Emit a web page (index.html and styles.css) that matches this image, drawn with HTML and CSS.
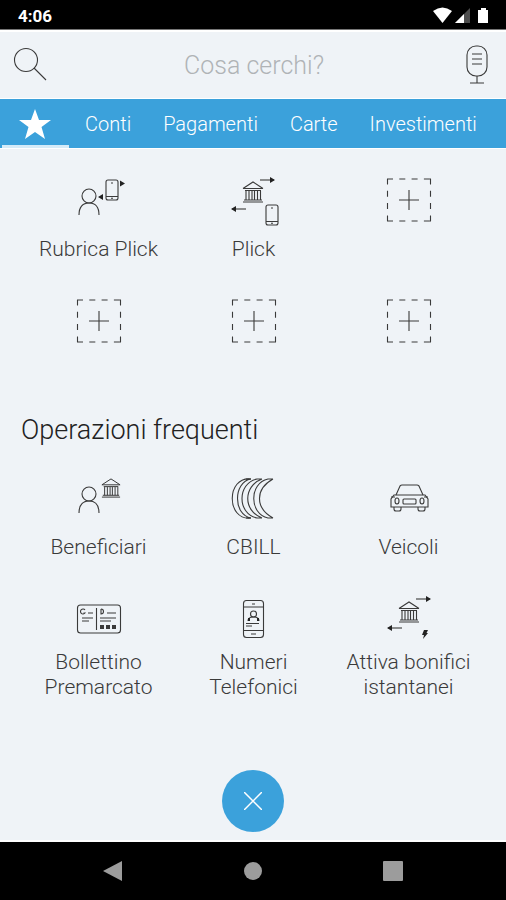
FILE: index.html
```html
<!DOCTYPE html>
<html lang="it">

<head>
    <meta charset="UTF-8">
    <meta name="viewport" content="width=device-width, initial-scale=1.0">
    <title>Operazioni</title>
    <link rel="stylesheet" href="styles.css">
</head>

<body>
    <!-- shapes shared by several icons -->
    <svg class="sprite" aria-hidden="true">
        <symbol id="empty" viewBox="0 0 56 50">
            <path d="M6 4H50M6 46H50M6.500 3.500V46.500M49.500 3.500V46.500" stroke-dasharray="6 6.300" />
            <path d="M28 15V35M18 25H38" />
        </symbol>
        <symbol id="person" viewBox="0 0 22 28">
            <circle cx="11" cy="8" r="7" />
            <path d="M1 27C1 19 5 15 11 15S21 19 21 27" />
        </symbol>
        <symbol id="bank" viewBox="0 0 22 22">
            <path d="M1 7.500L11 1L21 7.500M1 7.500H21M3 9.500H19M1 21H21M2 19H20" />
            <path d="M4 10V19M7 10V19M10 10V19M12.500 10V19M15.500 10V19M18.500 10V19" />
        </symbol>
        <symbol id="phone" viewBox="0 0 14 22">
            <rect x="1" y="1" width="12" height="20" rx="2" />
            <path d="M1 17.500H13M6 4H8M6 19.200H8" />
        </symbol>
        <symbol id="arrow" viewBox="0 0 16 6">
            <path d="M0 3H14" />
            <path class="solid" d="M10 0L15 3L10 6Z" />
        </symbol>
    </svg>

    <div class="status">
        <span>4:06</span>
        <svg width="58" height="18" viewBox="0 0 58 18">
            <path d="M1 4Q10.500 -3 20 4L10.500 16Z" />
            <path d="M23 16L38 1V16Z" opacity="0.300" />
            <path d="M23 16L32 7V16Z" />
            <path d="M46 3H49V1H54V3H56V16H46Z" />
        </svg>
    </div>

    <header>
        <label for="search" aria-label="Cerca">
            <svg class="icon" width="34" height="34" viewBox="0 0 34 34">
                <circle cx="12" cy="12" r="11.500" />
                <path d="M20 20L32 32" />
            </svg>
        </label>
        <input type="text" id="search" placeholder="Cosa cerchi?">
        <button type="button" aria-label="Ricerca vocale">
            <svg class="icon" width="22" height="40" viewBox="0 0 22 40">
                <rect x="1" y="1" width="20" height="30" rx="9" />
                <path d="M6 9H16M6 14H16M6 19H16M11 31V38M4 38H18" />
            </svg>
        </button>
    </header>

    <nav class="tabs">
        <a href="#preferiti" class="active" aria-label="Preferiti">
            <svg width="32" height="30" viewBox="0 0 32 30">
                <path d="M16 0L20 11H32L22.500 18L26 30L16 23L6 30L9.500 18L0 11H12Z" />
            </svg>
        </a>
        <a href="#conti">Conti</a>
        <a href="#pagamenti">Pagamenti</a>
        <a href="#carte">Carte</a>
        <a href="#investimenti">Investimenti</a>
    </nav>

    <main>
        <section class="grid" id="preferiti">
            <button type="button">
                <svg class="icon" width="56" height="50" viewBox="0 0 56 50">
                    <use href="#person" x="7" y="13" width="22" height="28" />
                    <use href="#phone" x="34" y="4" width="14" height="22" />
                    <path class="solid" d="M49 5.500L54 8.500L49 11.500ZM32 19L27 22L32 25Z" />
                </svg>
                <span>Rubrica Plick</span>
            </button>
            <button type="button">
                <svg class="icon" width="56" height="50" viewBox="0 0 56 50">
                    <use href="#bank" x="16" y="6" width="22" height="22" />
                    <use href="#arrow" x="34" y="2" width="16" height="6" />
                    <use href="#arrow" x="-20" y="-37" width="16" height="6" transform="rotate(180)" />
                    <use href="#phone" x="39" y="29" width="14" height="22" />
                </svg>
                <span>Plick</span>
            </button>
            <button type="button" aria-label="Aggiungi">
                <svg class="icon" width="56" height="50"><use href="#empty" /></svg>
            </button>
            <button type="button" aria-label="Aggiungi">
                <svg class="icon" width="56" height="50"><use href="#empty" /></svg>
            </button>
            <button type="button" aria-label="Aggiungi">
                <svg class="icon" width="56" height="50"><use href="#empty" /></svg>
            </button>
            <button type="button" aria-label="Aggiungi">
                <svg class="icon" width="56" height="50"><use href="#empty" /></svg>
            </button>
        </section>

        <h2>Operazioni frequenti</h2>

        <section class="grid">
            <button type="button">
                <svg class="icon" width="56" height="50" viewBox="0 0 56 50">
                    <use href="#person" x="7" y="13" width="22" height="28" />
                    <use href="#bank" x="30" y="5" width="20" height="20" />
                </svg>
                <span>Beneficiari</span>
            </button>
            <button type="button">
                <svg class="icon" width="56" height="50" viewBox="0 0 56 50">
                    <path d="M25 6C0 3 0 48 25 45M25 6C7 9 7 42 25 45" />
                    <path d="M36 6H31C11 10 11 41 31 45H36M36 6C17 13 17 38 36 45" />
                    <path d="M47 6H42C23 10 23 41 42 45H47M47 6C29 16 29 35 47 45" />
                    <path d="M20 6H25M20 45H25" />
                </svg>
                <span>CBILL</span>
            </button>
            <button type="button">
                <svg class="icon" width="56" height="50" viewBox="0 0 56 50">
                    <path d="M15 22L19 13Q20 12 21 12H36Q37 12 38 13L42 22" />
                    <path d="M13 22H44L47 26V34H10V26Z" />
                    <path d="M13 34V36Q13 38 15 38H18Q20 38 20 36V34M37 34V36Q37 38 39 38H42Q44 38 44 36V34M10 24H14M43 24H47" />
                    <ellipse cx="16" cy="28" rx="2" ry="3" />
                    <ellipse cx="41" cy="28" rx="2" ry="3" />
                    <rect x="22" y="26" width="13" height="5" rx="1" />
                </svg>
                <span>Veicoli</span>
            </button>
            <button type="button" class="tall">
                <svg class="icon" width="56" height="50" viewBox="0 0 56 50">
                    <rect x="6.500" y="11" width="43" height="28" rx="3" />
                    <path d="M25.500 14V36M11 24H22M11 27H18M17 19H22M29 24H45M29 27H40M36 19H45" />
                    <path d="M14 16A2.500 2.500 0 1 0 14 19H12.500M30 15V20A2.500 2.500 0 1 0 30 15" />
                    <path d="M29 33H45" stroke-width="4" stroke-dasharray="4 2" />
                </svg>
                <span>Bollettino Premarcato</span>
            </button>
            <button type="button" class="tall">
                <svg class="icon" width="56" height="50" viewBox="0 0 56 50">
                    <rect x="17.500" y="6.500" width="20" height="37" rx="3" />
                    <path d="M17.500 13H37.500M17.500 36.500H37.500M26 10H29M25 40H30" />
                    <circle cx="27.500" cy="20" r="3" />
                    <path d="M22 27Q22 23 27.500 23T33 27" />
                    <path d="M20 29.500H33M20 32H26" />
                    <path class="solid" d="M22 24H24V27H22ZM31 24H33V27H31Z" />
                </svg>
                <span>Numeri Telefonici</span>
            </button>
            <button type="button" class="tall">
                <svg class="icon" width="56" height="50" viewBox="0 0 56 50">
                    <use href="#bank" x="17" y="7" width="22" height="22" />
                    <use href="#arrow" x="35" y="2" width="16" height="6" />
                    <use href="#arrow" x="-21" y="-37" width="16" height="6" transform="rotate(180)" />
                    <path class="solid" d="M43 36H47L45.500 39H47L42 45L43 41H41Z" />
                </svg>
                <span>Attiva bonifici istantanei</span>
            </button>
        </section>
    </main>

    <button type="button" class="close" aria-label="Chiudi">
        <svg width="18" height="18" viewBox="0 0 18 18">
            <path d="M0 0L18 18M18 0L0 18" />
        </svg>
    </button>

    <footer>
        <button type="button" aria-label="Indietro">
            <svg width="20" height="22" viewBox="0 0 20 22"><path d="M0 11L19 1V21Z" /></svg>
        </button>
        <button type="button" aria-label="Home">
            <svg width="20" height="22" viewBox="0 0 20 22"><circle cx="10" cy="11" r="9" /></svg>
        </button>
        <button type="button" aria-label="Recenti">
            <svg width="20" height="22" viewBox="0 0 20 22"><rect y="1" width="20" height="20" rx="1" /></svg>
        </button>
    </footer>
</body>

</html>
```
FILE: styles.css
```css
* {
    box-sizing: border-box;
    margin: 0;
    padding: 0;
}

body {
    display: flex;
    flex-direction: column;
    min-height: 100vh;
    background-color: #eff3f7;
    color: #3a3a3a;
    font-family: Roboto, sans-serif;
    font-weight: 300;
}

button {
    border: none;
    background: none;
    color: inherit;
    font: inherit;
    cursor: pointer;
}

svg {
    display: block;
}

.sprite {
    display: none;
}

.icon {
    fill: none;
    stroke: #3a3a3a;
    stroke-width: 1.1;
    overflow: visible;
}

.solid {
    fill: #222;
    stroke: none;
}

.status {
    display: flex;
    align-items: center;
    justify-content: space-between;
    height: 30px;
    padding: 2px 16px 0 18px;
    background-color: #000;
    border-bottom: 1px solid #777;
    color: #fff;
    font-size: 17px;
    font-weight: 700;
}

.status svg {
    fill: #fff;
}

header {
    display: flex;
    align-items: center;
    justify-content: space-between;
    height: 69px;
    padding: 0 18px 0 14px;
    border-top: 2px solid #fff;
    border-bottom: 1px solid #fff;
}

header input {
    flex: 1;
    min-width: 0;
    padding-right: 6px;
    border: none;
    outline: none;
    background: none;
    color: #333;
    font: inherit;
    font-size: 25px;
    text-align: center;
}

header input::placeholder {
    color: #b0b3b6;
    opacity: 1;
}

.tabs {
    display: flex;
    height: 50px;
    padding-left: 2px;
    background-color: #3ba1db;
    border-bottom: 1px solid #fff;
    overflow: hidden;
}

.tabs a {
    display: flex;
    align-items: center;
    padding: 3px 16px 0;
    border-bottom: 3px solid transparent;
    color: #fff;
    font-size: 20px;
    text-decoration: none;
}

.tabs .active {
    padding: 3px 18px 0 17px;
    border-bottom-color: #d5ebf8;
}

.tabs svg {
    fill: #fff;
}

main {
    flex: 1;
    padding: 26px 20px 26px 21px;
}

.grid {
    display: grid;
    grid-template-columns: repeat(3, 1fr);
    row-gap: 34px;
}

.grid button {
    display: flex;
    flex-direction: column;
    align-items: center;
    gap: 12px;
    font-size: 21px;
    line-height: 25px;
}

.grid .tall {
    gap: 6px;
    padding: 0 10px;
}

h2 {
    margin: 68px 0 27px;
    color: #222;
    font-size: 27px;
    font-weight: 300;
    line-height: 32px;
}

.close {
    display: grid;
    place-items: center;
    align-self: center;
    width: 62px;
    height: 62px;
    margin-bottom: 8px;
    border-radius: 50%;
    background-color: #3ba1db;
}

.close svg {
    stroke: #fff;
    stroke-width: 1.5;
}

footer {
    display: flex;
    align-items: center;
    justify-content: center;
    gap: 120px;
    height: 60px;
    border-top: 2px solid #fff;
    background-color: #000;
}

footer svg {
    fill: #9c9c9c;
}
```
